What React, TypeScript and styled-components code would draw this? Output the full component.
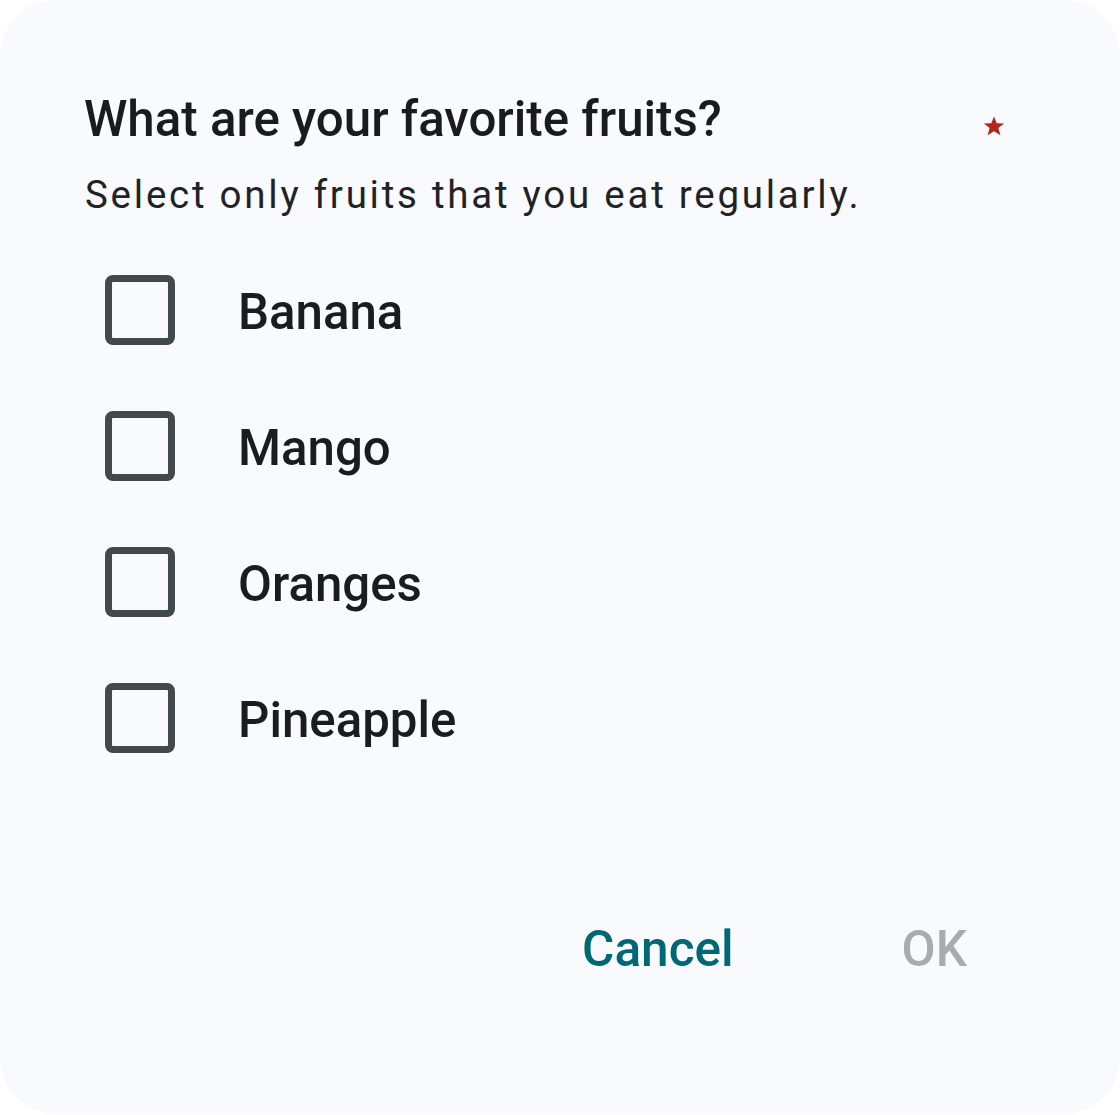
import { useState } from 'react';
import styled, { createGlobalStyle } from 'styled-components';

const GlobalStyle = createGlobalStyle`
  html, body {
    margin: 0;
    padding: 0;
    background: #ffffff;
  }
  * {
    box-sizing: border-box;
  }
`;

const Dialog = styled.div`
  width: 1120px;
  height: 1114px;
  border-radius: 56px;
  background: #f8fafd;
  font-family: Roboto, 'Liberation Sans', sans-serif;
  color: #191c1e;
  display: flex;
  flex-direction: column;
  padding: 89px 0 0 85px;
`;

const Header = styled.div`
  display: flex;
  justify-content: space-between;
  align-items: flex-start;
  padding-right: 115px;
`;

const Title = styled.h2`
  margin: 0 0 0 -1px;
  font-size: 49.25px;
  line-height: 60px;
  font-weight: 500;
`;

const RequiredMark = styled.svg`
  width: 22px;
  height: 22px;
  margin-top: 26px;
  fill: #b3261e;
`;

const Subtitle = styled.p`
  margin: 20px 0 0;
  font-size: 38.5px;
  line-height: 52px;
  letter-spacing: 2.75px;
  color: #1f2326;
`;

const Options = styled.ul`
  list-style: none;
  margin: 21px 0 0;
  padding: 0;
`;

const Option = styled.li`
  height: 136px;
  display: flex;
  align-items: center;
  padding-left: 20px;
  cursor: pointer;
`;

const Box = styled.span<{ $checked: boolean }>`
  width: 70px;
  height: 70px;
  border: 7px solid ${(p) => (p.$checked ? '#006874' : '#42494c')};
  border-radius: 8px;
  background: ${(p) => (p.$checked ? '#006874' : 'transparent')};
  flex-shrink: 0;
`;

const Label = styled.span`
  margin-left: 63px;
  padding-top: 4px;
  font-size: 49.2px;
  font-weight: 500;
  line-height: 60px;
  color: #1a1c1e;
`;

const Footer = styled.div`
  display: flex;
  justify-content: flex-end;
  gap: 124px;
  margin-top: 133px;
  padding-right: 131px;
`;

const TextButton = styled.button<{ $disabled?: boolean }>`
  border: none;
  background: none;
  padding: 0 22px;
  font-family: inherit;
  font-size: 49.5px;
  line-height: 60px;
  font-weight: 500;
  color: ${(p) => (p.$disabled ? '#a9abae' : '#006874')};
  cursor: ${(p) => (p.$disabled ? 'default' : 'pointer')};
`;

const fruits = ['Banana', 'Mango', 'Oranges', 'Pineapple'];

export default function App() {
  const [selected, setSelected] = useState<string[]>([]);

  const toggle = (fruit: string) =>
    setSelected((s) => (s.includes(fruit) ? s.filter((f) => f !== fruit) : [...s, fruit]));

  return (
    <>
      <GlobalStyle />
      <Dialog>
        <Header>
          <Title>What are your favorite fruits?</Title>
          <RequiredMark viewBox="0 0 24 24">
            <polygon points="12,1.5 15,9 23,9.3 16.8,14.3 19,22.2 12,17.8 5,22.2 7.2,14.3 1,9.3 9,9" />
          </RequiredMark>
        </Header>
        <Subtitle>Select only fruits that you eat regularly.</Subtitle>
        <Options>
          {fruits.map((fruit) => (
            <Option key={fruit} onClick={() => toggle(fruit)}>
              <Box $checked={selected.includes(fruit)} />
              <Label>{fruit}</Label>
            </Option>
          ))}
        </Options>
        <Footer>
          <TextButton>Cancel</TextButton>
          <TextButton $disabled={selected.length === 0}>OK</TextButton>
        </Footer>
      </Dialog>
    </>
  );
}
